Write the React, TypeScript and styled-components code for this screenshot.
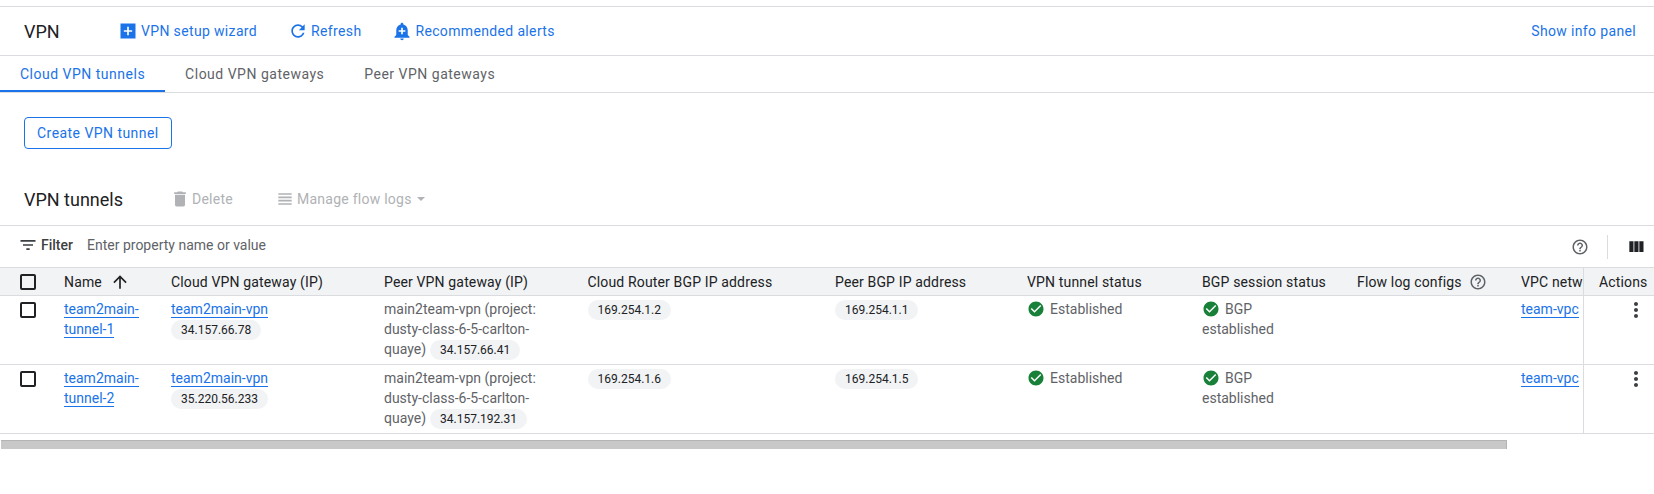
import React from 'react'
import styled, { createGlobalStyle } from 'styled-components'

const paths = {
  addBox: 'M3 3h18v18H3V3zm14 10v-2h-4V7h-2v4H7v2h4v4h2v-4h4z',
  refresh: 'M17.65 6.35C16.2 4.9 14.21 4 12 4c-4.42 0-7.99 3.58-7.99 8s3.57 8 7.99 8c3.73 0 6.84-2.55 7.73-6h-2.08c-.82 2.33-3.04 4-5.65 4-3.31 0-6-2.69-6-6s2.69-6 6-6c1.66 0 3.14.69 4.22 1.78L13 11h7V4l-2.35 2.35z',
  addAlert: 'M10.01 21.01c0 1.1.89 1.99 1.99 1.99s1.99-.89 1.99-1.99h-3.98zm8.87-4.19V11c0-3.25-2.25-5.97-5.28-6.69v-.72C13.6 2.71 12.89 2 12 2s-1.6.71-1.6 1.59v.72C7.37 5.03 5.12 7.75 5.12 11v5.82L3 18.94V20h18v-1.06l-2.12-2.12zM16 13.01h-3v3h-2v-3H8V11h3V8h2v3h3v2.01z',
  trash: 'M6 19c0 1.1.9 2 2 2h8c1.1 0 2-.9 2-2V7H6v12zM19 4h-3.5l-1-1h-5l-1 1H5v2h14V4z',
  headline: 'M4 15h16v-2H4v2zm0 4h16v-2H4v2zm0-8h16V9H4v2zm0-6v2h16V5H4z',
  filter: 'M10 18h4v-2h-4v2zM3 6v2h18V6H3zm3 7h12v-2H6v2z',
  arrowUp: 'M4 12l1.41 1.41L11 7.83V20h2V7.83l5.58 5.59L20 12l-8-8-8 8z',
  help: 'M11 18h2v-2h-2v2zm1-16C6.48 2 2 6.48 2 12s4.48 10 10 10 10-4.48 10-10S17.52 2 12 2zm0 18c-4.41 0-8-3.59-8-8s3.59-8 8-8 8 3.59 8 8-3.59 8-8 8zm0-14c-2.21 0-4 1.79-4 4h2c0-1.1.9-2 2-2s2 .9 2 2c0 2-3 1.75-3 5h2c0-2.25 3-2.5 3-5 0-2.21-1.79-4-4-4z',
  columns: 'M10 18h5V5h-5v13zm-6 0h5V5H4v13zM16 5v13h5V5h-5z',
  check: 'M12 2C6.48 2 2 6.48 2 12s4.48 10 10 10 10-4.48 10-10S17.52 2 12 2zm-2 15l-5-5 1.41-1.41L10 14.17l7.59-7.59L19 8l-9 9z',
  more: 'M12 8c1.1 0 2-.9 2-2s-.9-2-2-2-2 .9-2 2 .9 2 2 2zm0 2c-1.1 0-2 .9-2 2s.9 2 2 2 2-.9 2-2-.9-2-2-2zm0 6c-1.1 0-2 .9-2 2s.9 2 2 2 2-.9 2-2-.9-2-2-2z',
}

type IconProps = { name: keyof typeof paths; size?: number; color: string }
const Icon = ({ name, size = 20, color }: IconProps) => (
  <IconSvg width={size} height={size} viewBox="0 0 24 24" fill={color}>
    <path d={paths[name]} />
  </IconSvg>
)

type TunnelRow = {
  name: string
  tunnelSuffix: string
  gatewayIp: string
  peerIp: string
  routerIp: string
  peerBgpIp: string
}

const rows: TunnelRow[] = [
  { name: 'team2main-', tunnelSuffix: 'tunnel-1', gatewayIp: '34.157.66.78', peerIp: '34.157.66.41', routerIp: '169.254.1.2', peerBgpIp: '169.254.1.1' },
  { name: 'team2main-', tunnelSuffix: 'tunnel-2', gatewayIp: '35.220.56.233', peerIp: '34.157.192.31', routerIp: '169.254.1.6', peerBgpIp: '169.254.1.5' },
]

export default function App() {
  return (
    <Page>
      <GlobalStyle />
      <Header>
        <PageTitle>VPN</PageTitle>
        <HeaderActions>
          <HeaderAction><Icon name="addBox" color="#1a73e8" />VPN setup wizard</HeaderAction>
          <HeaderAction><Icon name="refresh" color="#1a73e8" />Refresh</HeaderAction>
          <HeaderAction><Icon name="addAlert" color="#1a73e8" />Recommended alerts</HeaderAction>
        </HeaderActions>
        <InfoPanelLink>Show info panel</InfoPanelLink>
      </Header>

      <Tabs>
        <Tab $active>Cloud VPN tunnels</Tab>
        <Tab>Cloud VPN gateways</Tab>
        <Tab>Peer VPN gateways</Tab>
      </Tabs>

      <CreateSection>
        <OutlineButton>Create VPN tunnel</OutlineButton>
      </CreateSection>

      <TitleRow>
        <SectionTitle>VPN tunnels</SectionTitle>
        <DisabledAction><Icon name="trash" color="#b0b2b5" />Delete</DisabledAction>
        <DisabledAction $wide>
          <Icon name="headline" color="#b0b2b5" />Manage flow logs<Caret />
        </DisabledAction>
      </TitleRow>

      <FilterRow>
        <FilterLabel><Icon name="filter" color="#3c4043" />Filter</FilterLabel>
        <FilterPlaceholder>Enter property name or value</FilterPlaceholder>
        <FilterTools>
          <Icon name="help" size={18} color="#5f6368" />
          <ToolDivider />
          <Icon name="columns" size={20} color="#202124" />
        </FilterTools>
      </FilterRow>

      <TableFrame>
        <TableScroller>
          <HeadRow>
            <CheckCell><Checkbox /></CheckCell>
            <HeadCell>Name <Icon name="arrowUp" size={20} color="#202124" /></HeadCell>
            <HeadCell>Cloud VPN gateway (IP)</HeadCell>
            <HeadCell>Peer VPN gateway (IP)</HeadCell>
            <HeadCell>Cloud Router BGP IP address</HeadCell>
            <HeadCell>Peer BGP IP address</HeadCell>
            <HeadCell>VPN tunnel status</HeadCell>
            <HeadCell>BGP session status</HeadCell>
            <HeadCell>Flow log configs <Icon name="help" size={18} color="#5f6368" /></HeadCell>
            <HeadCell>VPC network</HeadCell>
          </HeadRow>
          {rows.map((row) => (
            <BodyRow key={row.tunnelSuffix}>
              <CheckCell><Checkbox /></CheckCell>
              <Cell><TextLink>{row.name}</TextLink><br /><TextLink>{row.tunnelSuffix}</TextLink></Cell>
              <Cell><TextLink>team2main-vpn</TextLink><br /><Chip>{row.gatewayIp}</Chip></Cell>
              <PeerCell>main2team-vpn (project: dusty-class-6-5-carlton-quaye)<Chip $inline>{row.peerIp}</Chip></PeerCell>
              <Cell><Chip>{row.routerIp}</Chip></Cell>
              <Cell><Chip>{row.peerBgpIp}</Chip></Cell>
              <Cell><StatusIcon><Icon name="check" size={18} color="#188038" /></StatusIcon>Established</Cell>
              <BgpCell><StatusIcon><Icon name="check" size={18} color="#188038" /></StatusIcon>BGP established</BgpCell>
              <Cell />
              <Cell><TextLink>team-vpc</TextLink></Cell>
            </BodyRow>
          ))}
        </TableScroller>
        <ActionsColumn>
          <ActionsHead>Actions</ActionsHead>
          {rows.map((row) => (
            <ActionsCell key={row.tunnelSuffix}>
              <Icon name="more" size={24} color="#3c4043" />
            </ActionsCell>
          ))}
        </ActionsColumn>
      </TableFrame>

      <Scrollbar>
        <ScrollThumb />
      </Scrollbar>
    </Page>
  )
}

const GlobalStyle = createGlobalStyle`
  html, body {
    margin: 0;
    background: #fff;
  }
  * {
    box-sizing: border-box;
  }
`

const Page = styled.div`
  width: 1654px;
  height: 494px;
  padding-top: 6px;
  overflow: hidden;
  font-family: Roboto, 'Liberation Sans', sans-serif;
  font-size: 14px;
  color: #202124;
`

const IconSvg = styled.svg`
  display: block;
  flex: none;
`

const Header = styled.div`
  display: flex;
  align-items: center;
  height: 50px;
  padding: 0 18px 0 24px;
  border-top: 1px solid #dadce0;
  border-bottom: 1px solid #dadce0;
`

const PageTitle = styled.div`
  width: 94px;
  font-size: 18px;
`

const HeaderActions = styled.div`
  display: flex;
  gap: 31px;
`

const HeaderAction = styled.div`
  display: flex;
  align-items: center;
  gap: 3px;
  color: #1a73e8;
  letter-spacing: 0.35px;
`

const InfoPanelLink = styled.div`
  margin-left: auto;
  color: #1a73e8;
  letter-spacing: 0.35px;
`

const Tabs = styled.div`
  display: flex;
  height: 37px;
  border-bottom: 1px solid #dadce0;
`

const Tab = styled.div<{ $active?: boolean }>`
  height: 36px;
  padding: 0 20px;
  line-height: 36px;
  letter-spacing: 0.5px;
  color: ${(props) => (props.$active ? '#1a73e8' : '#5f6368')};
  border-bottom: 2px solid ${(props) => (props.$active ? '#1a73e8' : 'transparent')};
`

const CreateSection = styled.div`
  height: 84px;
  padding: 24px 0 0 24px;
`

const OutlineButton = styled.div`
  display: inline-flex;
  align-items: center;
  height: 32px;
  padding: 0 12px;
  border: 1px solid #1a73e8;
  border-radius: 4px;
  color: #1a73e8;
  letter-spacing: 0.45px;
`

const TitleRow = styled.div`
  display: flex;
  align-items: center;
  height: 49px;
  padding: 0 0 4px 24px;
  border-bottom: 1px solid #dadce0;
`

const SectionTitle = styled.div`
  width: 146px;
  font-size: 18px;
`

const DisabledAction = styled.div<{ $wide?: boolean }>`
  display: flex;
  align-items: center;
  gap: 2px;
  width: ${(props) => (props.$wide ? 'auto' : '105px')};
  color: #b0b2b5;
  letter-spacing: 0.25px;
`

const Caret = styled.span`
  margin-left: 3px;
  border-left: 4px solid transparent;
  border-right: 4px solid transparent;
  border-top: 4px solid #b0b2b5;
`

const FilterRow = styled.div`
  display: flex;
  align-items: center;
  height: 41px;
  padding: 0 8px 3px 18px;
`

const FilterLabel = styled.div`
  display: flex;
  align-items: center;
  gap: 3px;
  width: 69px;
  font-weight: 500;
  color: #3c4043;
`

const FilterPlaceholder = styled.div`
  color: #5f6368;
`

const FilterTools = styled.div`
  display: flex;
  align-items: center;
  margin-left: auto;
  padding-top: 4px;
`

const ToolDivider = styled.span`
  width: 1px;
  height: 24px;
  margin: 0 18px;
  background: #dadce0;
`

const TableFrame = styled.div`
  display: flex;
  width: 1654px;
  border-bottom: 1px solid #dadce0;
`

const TableScroller = styled.div`
  width: 1583px;
  overflow: hidden;
`

const columnTemplate = '64px 107px 213px 203.5px 247.5px 192px 175px 155px 164px 200px'

const HeadRow = styled.div`
  display: grid;
  grid-template-columns: ${columnTemplate};
  height: 29px;
  background: #f1f3f4;
  border-top: 1px solid #dadce0;
  border-bottom: 1px solid #dadce0;
`

const BodyRow = styled.div`
  display: grid;
  grid-template-columns: ${columnTemplate};
  height: 69px;
  border-bottom: 1px solid #dadce0;
  &:last-child {
    border-bottom: none;
    height: 68px;
  }
`

const HeadCell = styled.div`
  display: flex;
  align-items: center;
  gap: 4px;
  white-space: pre;
  overflow: hidden;
  letter-spacing: 0.15px;
  color: #202124;
`

const CheckCell = styled.div`
  padding: 6px 0 0 20px;
`

const Checkbox = styled.div`
  width: 16px;
  height: 16px;
  border: 2px solid #202124;
  border-radius: 2px;
`

const Cell = styled.div`
  padding-top: 3px;
  line-height: 20px;
  color: #5f6368;
`

const PeerCell = styled(Cell)`
  padding-right: 38px;
`

const BgpCell = styled(Cell)`
  padding-right: 55px;
`

const StatusIcon = styled.span`
  display: inline-block;
  vertical-align: -4px;
  margin-right: 5px;
`

const TextLink = styled.span`
  color: #1a73e8;
  border-bottom: 1px solid #1a73e8;
`

const Chip = styled.span<{ $inline?: boolean }>`
  display: inline-block;
  height: 20px;
  margin-left: ${(props) => (props.$inline ? '4px' : '0')};
  padding: 0 10px;
  border-radius: 10px;
  background: #f1f3f4;
  font-size: 12px;
  line-height: 20px;
  color: #202124;
`

const ActionsColumn = styled.div`
  flex: 1;
  border-left: 1px solid #dadce0;
`

const ActionsHead = styled.div`
  display: flex;
  align-items: center;
  height: 29px;
  padding-left: 15px;
  background: #f1f3f4;
  border-top: 1px solid #dadce0;
  border-bottom: 1px solid #dadce0;
  letter-spacing: 0.15px;
`

const ActionsCell = styled.div`
  display: flex;
  justify-content: flex-end;
  height: 69px;
  padding: 2px 6px 0 0;
  border-bottom: 1px solid #dadce0;
  &:last-child {
    border-bottom: none;
    height: 68px;
  }
`

const Scrollbar = styled.div`
  height: 9px;
  margin: 6px 0 0 1px;
`

const ScrollThumb = styled.div`
  width: 1506px;
  height: 9px;
  background: #c8c8c8;
  border-top: 1px solid #b4b4b4;
  border-right: 1px solid #b4b4b4;
`
